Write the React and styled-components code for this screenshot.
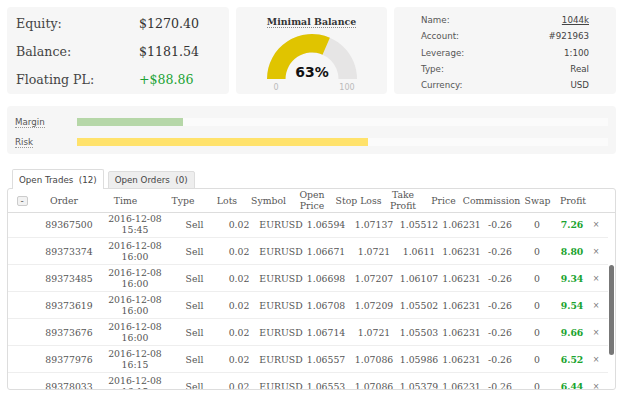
import React, { useLayoutEffect, useRef } from "react";
import styled, { createGlobalStyle } from "styled-components";

const GlobalStyle = createGlobalStyle`
  html, body { margin: 0; padding: 0; background: #fff; }
  body { font-family: "DejaVu Sans", sans-serif; color: #444; }
  * { box-sizing: border-box; }
`;

const trades = [
  ["89359812", "2016-12-08", "14:30", "1.06702", "1.07244", "1.05621", "9.98"],
  ["89361447", "2016-12-08", "15:00", "1.06655", "1.07198", "1.05574", "8.48"],
  ["89364209", "2016-12-08", "15:15", "1.06612", "1.07151", "1.05530", "7.62"],
  ["89367500", "2016-12-08", "15:45", "1.06594", "1.07137", "1.05512", "7.26"],
  ["89373374", "2016-12-08", "16:00", "1.06671", "1.0721", "1.0611", "8.80"],
  ["89373485", "2016-12-08", "16:00", "1.06698", "1.07207", "1.06107", "9.34"],
  ["89373619", "2016-12-08", "16:00", "1.06708", "1.07209", "1.05502", "9.54"],
  ["89373676", "2016-12-08", "16:00", "1.06714", "1.0721", "1.05503", "9.66"],
  ["89377976", "2016-12-08", "16:15", "1.06557", "1.07086", "1.05986", "6.52"],
  ["89378033", "2016-12-08", "16:15", "1.06553", "1.07086", "1.05379", "6.44"],
  ["89379120", "2016-12-08", "16:30", "1.06540", "1.07071", "1.05366", "6.18"],
  ["89380455", "2016-12-08", "16:45", "1.06528", "1.07062", "1.05351", "5.94"],
];

function Gauge({ value }) {
  const a = Math.PI - (value / 100) * Math.PI;
  const ox = (45 * Math.cos(a)).toFixed(2);
  const oy = (-45 * Math.sin(a)).toFixed(2);
  const ix = (26.5 * Math.cos(a)).toFixed(2);
  const iy = (-26.5 * Math.sin(a)).toFixed(2);
  return (
    <svg width="110" height="62" viewBox="-55 -47 110 62">
      <path d="M -45 0 A 45 45 0 0 1 45 0 L 26.5 0 A 26.5 26.5 0 0 0 -26.5 0 Z" fill="#e6e5e5" />
      <path d={`M -45 0 A 45 45 0 0 1 ${ox} ${oy} L ${ix} ${iy} A 26.5 26.5 0 0 0 -26.5 0 Z`} fill="#e0c400" />
      <text x="0" y="-2" textAnchor="middle" fontFamily="DejaVu Sans, sans-serif" fontWeight="bold" fontSize="14" fill="#111">
        {value}%
      </text>
      <text x="-36" y="11" textAnchor="middle" fontFamily="DejaVu Sans, sans-serif" fontSize="8" fill="#bbb">0</text>
      <text x="35" y="11" textAnchor="middle" fontFamily="DejaVu Sans, sans-serif" fontSize="8" fill="#bbb">100</text>
    </svg>
  );
}

export default function App() {
  const bodyRef = useRef(null);
  useLayoutEffect(() => {
    if (bodyRef.current) bodyRef.current.scrollTop = 83;
  }, []);

  return (
    <Page>
      <GlobalStyle />
      <TopRow>
        <SummaryPanel>
          <SumLabel>Equity:</SumLabel>
          <SumValue>$1270.40</SumValue>
          <SumLabel>Balance:</SumLabel>
          <SumValue>$1181.54</SumValue>
          <SumLabel>Floating PL:</SumLabel>
          <SumValue $green>+$88.86</SumValue>
        </SummaryPanel>
        <GaugePanel>
          <GaugeTitle>Minimal Balance</GaugeTitle>
          <Gauge value={63} />
        </GaugePanel>
        <InfoPanel>
          <InfoLabel>Name:</InfoLabel>
          <InfoValue $link>1044k</InfoValue>
          <InfoLabel>Account:</InfoLabel>
          <InfoValue>#921963</InfoValue>
          <InfoLabel>Leverage:</InfoLabel>
          <InfoValue>1:100</InfoValue>
          <InfoLabel>Type:</InfoLabel>
          <InfoValue>Real</InfoValue>
          <InfoLabel>Currency:</InfoLabel>
          <InfoValue>USD</InfoValue>
        </InfoPanel>
      </TopRow>

      <BarsPanel>
        <BarLabel>Margin</BarLabel>
        <Track>
          <Fill style={{ width: "20%" }} $color="#b6d7a8" />
        </Track>
        <BarLabel>Risk</BarLabel>
        <Track>
          <Fill style={{ width: "54.8%" }} $color="#ffe26b" />
        </Track>
      </BarsPanel>

      <Tabs>
        <Tab $active>Open Trades&nbsp; (12)</Tab>
        <Tab>Open Orders&nbsp; (0)</Tab>
      </Tabs>

      <TableBox>
        <HeadRow>
          <HeadCell>
            <Toggle>-</Toggle>
          </HeadCell>
          <HeadCell>Order</HeadCell>
          <HeadCell>Time</HeadCell>
          <HeadCell>Type</HeadCell>
          <HeadCell>Lots</HeadCell>
          <HeadCell>Symbol</HeadCell>
          <HeadCell>Open<br />Price</HeadCell>
          <HeadCell>Stop Loss</HeadCell>
          <HeadCell>Take<br />Profit</HeadCell>
          <HeadCell>Price</HeadCell>
          <HeadCell>Commission</HeadCell>
          <HeadCell>Swap</HeadCell>
          <HeadCell>Profit</HeadCell>
          <HeadCell />
        </HeadRow>
        <Body ref={bodyRef}>
          {trades.map((t) => (
            <Row key={t[0]}>
              <Cell />
              <Cell>{t[0]}</Cell>
              <Cell>{t[1]}<br />{t[2]}</Cell>
              <Cell>Sell</Cell>
              <Cell>0.02</Cell>
              <Cell>EURUSD</Cell>
              <Cell>{t[3]}</Cell>
              <Cell>{t[4]}</Cell>
              <Cell>{t[5]}</Cell>
              <Cell>1.06231</Cell>
              <Cell>-0.26</Cell>
              <Cell>0</Cell>
              <Cell $profit>{t[6]}</Cell>
              <Close>×</Close>
            </Row>
          ))}
        </Body>
        <ScrollThumb />
      </TableBox>
    </Page>
  );
}

const Page = styled.div`
  width: 625px;
  padding: 7px 9px 0 7px;
`;

const TopRow = styled.div`
  display: flex;
  gap: 7px;
  height: 87px;
`;

const Panel = styled.div`
  background: #f6f6f6;
  border-radius: 4px;
`;

const SummaryPanel = styled(Panel)`
  width: 222px;
  display: grid;
  grid-template-columns: 123px 1fr;
  grid-auto-rows: 28px;
  align-items: center;
  padding: 2px 0 0 9px;
  font-family: "DejaVu Serif", serif;
  font-size: 12.6px;
  color: #444;
`;

const SumLabel = styled.div``;

const SumValue = styled.div`
  color: ${(p) => (p.$green ? "#1ba334" : "#333")};
`;

const GaugePanel = styled(Panel)`
  width: 151px;
  display: flex;
  flex-direction: column;
  align-items: center;
  padding-top: 9px;
  gap: 4px;
`;

const GaugeTitle = styled.div`
  font-family: "DejaVu Serif", serif;
  font-weight: bold;
  font-size: 9.4px;
  line-height: 11px;
  color: #333;
  border-bottom: 1px dotted #888;
`;

const InfoPanel = styled(Panel)`
  width: 222px;
  display: grid;
  grid-template-columns: 1fr auto;
  grid-auto-rows: 16.3px;
  align-items: center;
  padding: 5px 27px 0;
  font-size: 8.7px;
  color: #555;
`;

const InfoLabel = styled.div``;

const InfoValue = styled.div`
  text-align: right;
  color: #444;
  text-decoration: ${(p) => (p.$link ? "underline" : "none")};
`;

const BarsPanel = styled(Panel)`
  margin-top: 12px;
  height: 48px;
  display: grid;
  grid-template-columns: 62px 1fr;
  grid-auto-rows: 20px;
  align-items: center;
  padding: 6px 8px 0 8px;
`;

const BarLabel = styled.div`
  justify-self: start;
  font-size: 8.7px;
  line-height: 10px;
  color: #555;
  border-bottom: 1px dotted #999;
`;

const Track = styled.div`
  height: 8px;
  background: #fbfbfb;
`;

const Fill = styled.div`
  height: 100%;
  background: ${(p) => p.$color};
`;

const Tabs = styled.div`
  display: flex;
  align-items: flex-end;
  gap: 4px;
  margin-top: 15px;
  padding-left: 5px;
  position: relative;
  z-index: 1;
  margin-bottom: -1px;
`;

const Tab = styled.div`
  height: ${(p) => (p.$active ? "20px" : "18px")};
  padding: 0 6px;
  display: flex;
  align-items: center;
  font-size: 8.7px;
  color: #444;
  background: ${(p) => (p.$active ? "#fff" : "#eee")};
  border: 1px solid #ddd;
  border-bottom: ${(p) => (p.$active ? "none" : "1px solid #ddd")};
  border-radius: 2px 2px 0 0;
`;

const TableBox = styled.div`
  position: relative;
  width: 609px;
  border: 1px solid #ddd;
  border-radius: 3px;
  background: #fff;
  font-family: "DejaVu Serif", serif;
  font-size: 9.3px;
  color: #555;
  overflow: hidden;
`;

const HeadRow = styled.div`
  display: grid;
  grid-template-columns: 28px 56px 67px 48px 40px 43px 44px 49px 40px 41px 55px 37px 34px 1fr;
  height: 24px;
  padding-top: 1px;
  border-bottom: 1px solid #ddd;
  align-items: center;
`;

const HeadCell = styled.div`
  text-align: center;
  white-space: nowrap;
  line-height: 10.7px;
  display: flex;
  justify-content: center;
`;

const Toggle = styled.div`
  width: 11px;
  height: 10px;
  border: 1px solid #ccc;
  border-radius: 2px;
  background: #f2f2f2;
  font-family: "DejaVu Sans", sans-serif;
  font-size: 9px;
  line-height: 8px;
  color: #555;
  text-align: center;
`;

const Body = styled.div`
  height: 176px;
  overflow: hidden;
  padding-right: 7px;
`;

const ScrollThumb = styled.div`
  position: absolute;
  right: 1px;
  top: 76px;
  width: 5px;
  height: 90px;
  border-radius: 3px;
  background: #777;
`;

const Row = styled.div`
  display: grid;
  grid-template-columns: 28px 66px 66px 53px 36px 48px 42px 54px 36px 49px 28px 46px 24px 24px;
  height: 27px;
  border-bottom: 1px solid #eee;
  align-items: center;
`;

const Cell = styled.div`
  text-align: center;
  white-space: nowrap;
  line-height: 11px;
  display: flex;
  justify-content: center;
  font-weight: ${(p) => (p.$profit ? "bold" : "normal")};
  color: ${(p) => (p.$profit ? "#1aa32f" : "#555")};
`;

const Close = styled.div`
  text-align: center;
  font-family: "DejaVu Sans", sans-serif;
  font-size: 8px;
  color: #777;
`;
